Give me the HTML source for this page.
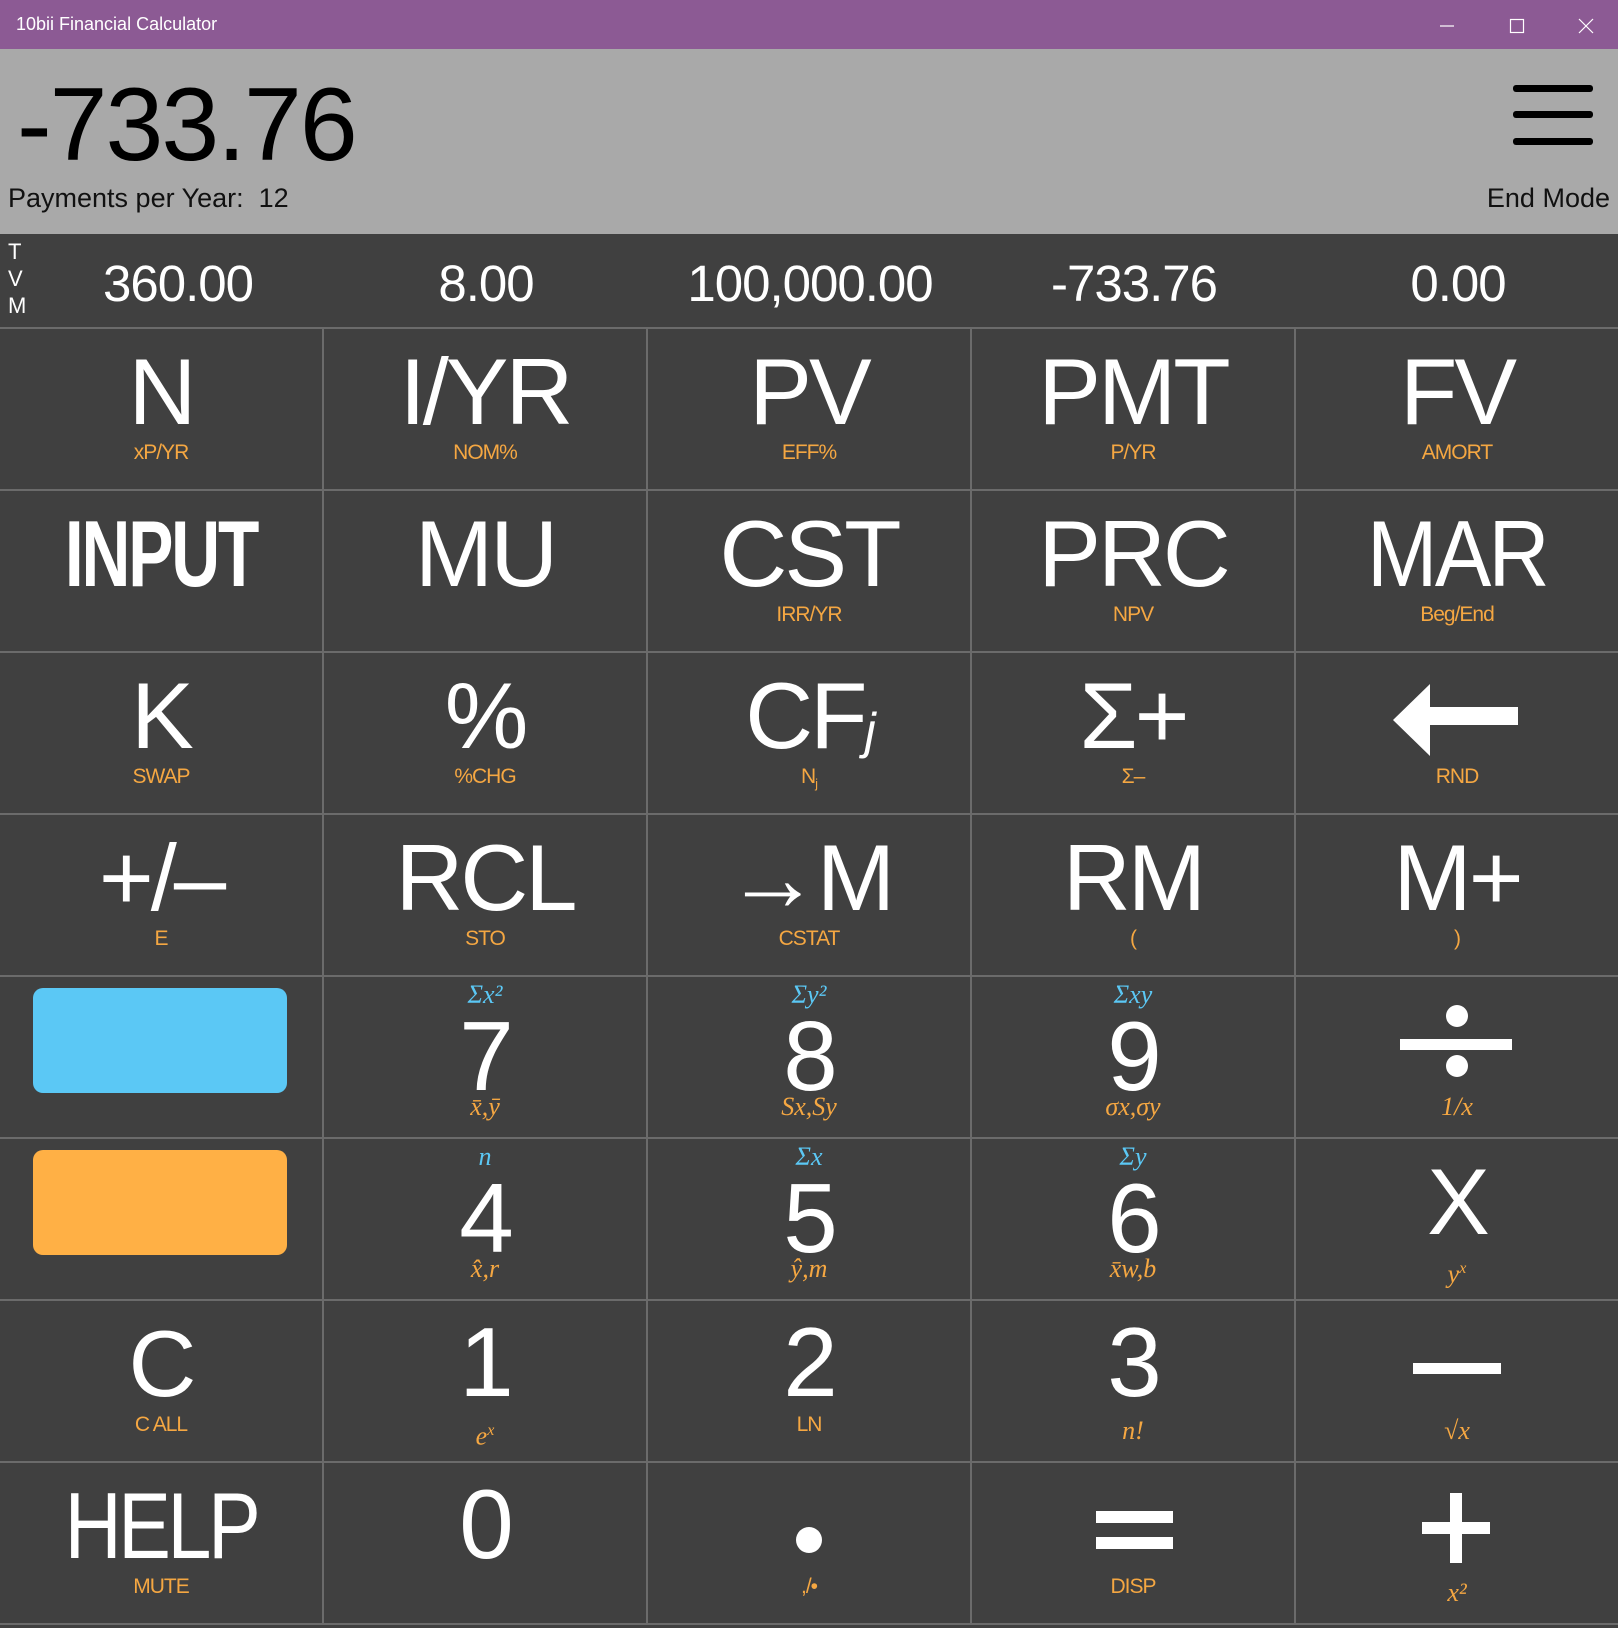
<!DOCTYPE html>
<html><head><meta charset="utf-8"><style>
*{margin:0;padding:0;box-sizing:border-box}
body{width:1618px;height:1628px;overflow:hidden;background:#404040;font-family:"Liberation Sans",sans-serif;position:relative}
.title{position:absolute;left:0;top:0;width:1618px;height:49px;background:#8c5a94;color:#fff;font-size:18px;line-height:49px;padding-left:16px}
.disp{position:absolute;left:0;top:49px;width:1618px;height:185px;background:#a9a9a9}
.tvm{position:absolute;left:0;top:234px;width:1618px;height:93px;background:#404040;color:#fff}
.tv{position:absolute;top:20px;font-size:51px;width:324px;text-align:center;line-height:60px;letter-spacing:-1px}
.grid{position:absolute;left:0;top:327px;display:grid;grid-template-columns:324px 324px 324px 324px 322px;grid-template-rows:repeat(8,162px);border-top:2px solid #6b6b6b}
.c{position:relative;border-right:2px solid #6b6b6b;border-bottom:2px solid #6b6b6b;color:#fff;overflow:hidden}
.c:nth-child(5n){border-right:none}
.m{position:absolute;left:0;right:0;top:16px;text-align:center;font-size:94px;line-height:94px;white-space:nowrap;letter-spacing:-3px}
.s{position:absolute;left:0;right:0;top:112px;text-align:center;font-size:21px;line-height:24px;color:#f5a742;letter-spacing:-1px}
.b{position:absolute;left:0;right:0;top:4px;text-align:center;font-size:26px;line-height:28px;color:#5bc8f5;font-family:"Liberation Serif",serif;font-style:italic}
.i{font-family:"Liberation Serif",serif;font-style:italic;font-size:26px;letter-spacing:0;top:118px}
.n{font-size:98px;top:32px}
.n2{font-size:98px;top:14px}
</style></head><body>
<div class="title">10bii Financial Calculator
<svg style="position:absolute;left:1440px;top:18px" width="160" height="16"><line x1="0" y1="8" x2="14" y2="8" stroke="#fff" stroke-width="1.2"/><rect x="70.5" y="1.5" width="13" height="13" fill="none" stroke="#fff" stroke-width="1.2"/><line x1="139" y1="1" x2="153" y2="15" stroke="#fff" stroke-width="1.2"/><line x1="153" y1="1" x2="139" y2="15" stroke="#fff" stroke-width="1.2"/></svg>
</div>
<div class="disp">
<div style="position:absolute;left:17px;top:24px;font-size:104px;line-height:104px;color:#000;letter-spacing:-2px">-733.76</div>
<div style="position:absolute;left:8px;top:134px;font-size:27px;color:#111">Payments per Year:&nbsp; 12</div>
<div style="position:absolute;right:8px;top:134px;font-size:27px;color:#111">End Mode</div>
<div style="position:absolute;left:1513px;top:36px;width:80px;height:7px;background:#000;border-radius:3px"></div>
<div style="position:absolute;left:1513px;top:62px;width:80px;height:7px;background:#000;border-radius:3px"></div>
<div style="position:absolute;left:1513px;top:89px;width:80px;height:7px;background:#000;border-radius:3px"></div>
</div>
<div class="tvm">
<div style="position:absolute;left:8px;top:4px;font-size:22px;line-height:27px">T<br>V<br>M</div>
<div class="tv" style="left:16px">360.00</div>
<div class="tv" style="left:324px">8.00</div>
<div class="tv" style="left:648px">100,000.00</div>
<div class="tv" style="left:972px">-733.76</div>
<div class="tv" style="left:1296px">0.00</div>
</div>
<div class="grid">
<div class="c"><div class="m">N</div><div class="s">xP/YR</div></div>
<div class="c"><div class="m">I/YR</div><div class="s">NOM%</div></div>
<div class="c"><div class="m">PV</div><div class="s">EFF%</div></div>
<div class="c"><div class="m">PMT</div><div class="s">P/YR</div></div>
<div class="c"><div class="m">FV</div><div class="s">AMORT</div></div>

<div class="c"><div class="m" style="font-weight:bold;transform:scaleX(0.72);letter-spacing:-3px">INPUT</div></div>
<div class="c"><div class="m">MU</div></div>
<div class="c"><div class="m">CST</div><div class="s">IRR/YR</div></div>
<div class="c"><div class="m">PRC</div><div class="s">NPV</div></div>
<div class="c"><div class="m" style="transform:scaleX(0.9)">MAR</div><div class="s">Beg/End</div></div>

<div class="c"><div class="m">K</div><div class="s">SWAP</div></div>
<div class="c"><div class="m">%</div><div class="s">%CHG</div></div>
<div class="c"><div class="m">CF<span style="font-size:50px;font-style:italic">j</span></div><div class="s">N<sub style="font-size:13px">j</sub></div></div>
<div class="c"><div class="m">Σ+</div><div class="s">Σ–</div></div>
<div class="c"><svg style="position:absolute;left:97px;top:31px" width="126" height="72"><polygon points="0,36 37,0 37,23 125,23 125,41 37,41 37,72" fill="#fff"/></svg><div class="s">RND</div></div>

<div class="c"><div class="m">+/–</div><div class="s">E</div></div>
<div class="c"><div class="m">RCL</div><div class="s">STO</div></div>
<div class="c"><div class="m">→M</div><div class="s">CSTAT</div></div>
<div class="c"><div class="m">RM</div><div class="s">(</div></div>
<div class="c"><div class="m">M+</div><div class="s">)</div></div>

<div class="c"><div style="position:absolute;left:33px;top:11px;width:254px;height:105px;background:#5bc8f5;border-radius:10px"></div></div>
<div class="c"><div class="b">Σx²</div><div class="m n">7</div><div class="s i">x̄,ȳ</div></div>
<div class="c"><div class="b">Σy²</div><div class="m n">8</div><div class="s i">Sx,Sy</div></div>
<div class="c"><div class="b">Σxy</div><div class="m n">9</div><div class="s i">σx,σy</div></div>
<div class="c"><svg style="position:absolute;left:104px;top:28px" width="114" height="72"><circle cx="57" cy="11" r="11" fill="#fff"/><rect x="0" y="34" width="112" height="11" fill="#fff"/><circle cx="57" cy="61" r="11" fill="#fff"/></svg><div class="s i">1/x</div></div>

<div class="c"><div style="position:absolute;left:33px;top:11px;width:254px;height:105px;background:#ffb045;border-radius:10px"></div></div>
<div class="c"><div class="b">n</div><div class="m n">4</div><div class="s i">x̂,r</div></div>
<div class="c"><div class="b">Σx</div><div class="m n">5</div><div class="s i">ŷ,m</div></div>
<div class="c"><div class="b">Σy</div><div class="m n">6</div><div class="s i">x̄w,b</div></div>
<div class="c"><div class="m">X</div><div class="s i">y<sup style="font-size:16px">x</sup></div></div>

<div class="c"><div class="m">C</div><div class="s">C ALL</div></div>
<div class="c"><div class="m n2">1</div><div class="s i">e<sup style="font-size:16px">x</sup></div></div>
<div class="c"><div class="m n2">2</div><div class="s">LN</div></div>
<div class="c"><div class="m n2">3</div><div class="s i">n!</div></div>
<div class="c"><div style="position:absolute;left:117px;top:62px;width:88px;height:11px;background:#fff"></div><div class="s i">√x</div></div>

<div class="c"><div class="m" style="transform:scaleX(0.84);letter-spacing:-4px">HELP</div><div class="s">MUTE</div></div>
<div class="c"><div class="m n2">0</div></div>
<div class="c"><div style="position:absolute;left:148px;top:64px;width:26px;height:26px;border-radius:50%;background:#fff"></div><div class="s">,/•</div></div>
<div class="c"><div style="position:absolute;left:124px;top:48px;width:77px;height:12px;background:#fff"></div><div style="position:absolute;left:124px;top:74px;width:77px;height:12px;background:#fff"></div><div class="s">DISP</div></div>
<div class="c"><svg style="position:absolute;left:126px;top:30px" width="70" height="70"><rect x="0" y="29" width="68" height="12" fill="#fff"/><rect x="28" y="0" width="12" height="70" fill="#fff"/></svg><div class="s i">x²</div></div>
</div>
</body></html>
